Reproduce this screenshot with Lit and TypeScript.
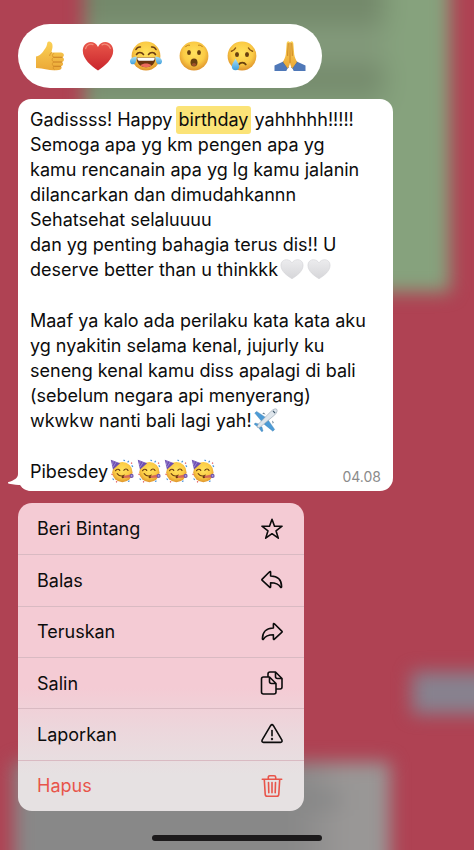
import { LitElement, html, css, svg, TemplateResult, SVGTemplateResult } from "lit";
import { customElement } from "lit/decorators.js";

const face = svg`<circle cx="16" cy="16" r="14.4" fill="url(#face)"/>`;

const emoji: Record<string, SVGTemplateResult> = {
  thumb: svg`
    <path d="M2 16.500c2.600-.8 5.200-2.200 6.800-4.600 1.800-2.600 3.700-4.600 4.200-7.400.3-1.900.6-3.200 2.300-3 2.600.3 3.600 3 3.200 5.800-.3 2-.9 3.400-1 5.200h9.400c3.300 0 4 4 1.400 4.800 2.400.9 2.200 4.200-.4 4.700 1.900 1 1.400 3.900-.9 4.300 1.300 1.300.5 3.500-2 3.700-3.600.3-8.600.6-12-.4C9 28.500 6 28.200 2 28z" fill="url(#hand)"/>
    <path d="M19.500 17.300h8.600M19.500 22h8.200M19.500 26.300h7" fill="none" stroke="#c97f22" stroke-width="1.100" stroke-linecap="round"/>
    <path d="M17.500 12.700c-1 .6-1.700 1.500-1.800 2.900" fill="none" stroke="#d8932c" stroke-width="1" stroke-linecap="round"/>
    <path d="M20.200 13.500c-2.300.3-2.400 3.300-.3 3.800-2.400.4-2.300 4.200 0 4.700-2.200.5-2 4 .2 4.300-1.400.8-1.100 2.800.5 3.400" fill="none" stroke="#d8932c" stroke-width=".9"/>`,
  heart: svg`<path d="M16 30.500C9.500 26 .8 19.500.8 10.800.8 5.500 4.300 2 8.600 2c3.300 0 5.900 1.900 7.400 4.900C17.500 3.900 20.100 2 23.400 2c4.300 0 7.800 3.500 7.800 8.800C31.200 19.500 22.500 26 16 30.500z" fill="url(#red)"/>
    <path d="M3.600 8.500C4.500 5 8 3.400 11 4.600M20 4.800c3.500-1.600 7.200.2 8.300 3.500" fill="none" stroke="#f59a86" stroke-width="1.300" stroke-linecap="round" opacity=".8"/>`,
  joy: svg`${face}
    <path d="M6 9.500c.8-1.700 2.600-2.700 4.400-2.500M26 9.500c-.8-1.700-2.600-2.700-4.400-2.500M6.500 14.500c1.400-2.600 5.200-2.600 7 0M18.500 14.500c1.800-2.600 5.600-2.600 7 0" fill="none" stroke="#6b3d12" stroke-width="1.600" stroke-linecap="round"/>
    <path d="M6.500 17.500h19c0 6-4 9.800-9.500 9.800s-9.500-3.800-9.500-9.800z" fill="#6a3410"/>
    <path d="M7.300 17.700h17.400c0 1.800-.6 3-1.800 3H9.200c-1.200 0-1.900-1.200-1.900-3z" fill="#fff"/>
    <path d="M10.500 25.200c3-2.300 8-2.300 11 0-3 2.700-8 2.700-11 0z" fill="#ec6a5c"/>
    <path d="M6.800 16.500C3 16.700-.3 18.500 0 21.800c.3 2.900 4 3.500 5.400.9.900-1.700 1-3.900 1.400-6.200zM25.200 16.500c3.800.2 7.100 2 6.800 5.300-.3 2.900-4 3.500-5.400.9-.9-1.700-1-3.900-1.400-6.200z" fill="url(#tear)"/>`,
  wow: svg`${face}
    <ellipse cx="11" cy="12.500" rx="1.900" ry="2.500" fill="#68400f"/><ellipse cx="21" cy="12.500" rx="1.900" ry="2.500" fill="#68400f"/>
    <path d="M7.500 6.800c1-1.300 2.500-1.800 4-1.600M24.500 6.800c-1-1.300-2.500-1.800-4-1.600" fill="none" stroke="#b8791b" stroke-width="1" stroke-linecap="round"/>
    <ellipse cx="16" cy="22.500" rx="3.500" ry="3.900" fill="#68400f"/><ellipse cx="16" cy="24.500" rx="2.200" ry="1.500" fill="#a0522c"/>`,
  cry: svg`${face}
    <path d="M5.500 11.300c1.500-.5 3.200-1.700 4-3.300M26.500 11.300c-1.500-.5-3.200-1.700-4-3.300" fill="none" stroke="#8a5614" stroke-width="1.500" stroke-linecap="round"/>
    <ellipse cx="11" cy="14.500" rx="2" ry="2.600" fill="#68400f"/><ellipse cx="21" cy="14.500" rx="2" ry="2.600" fill="#68400f"/>
    <path d="M12.800 24.500c1.500-2.600 5.500-2.600 7 0" fill="none" stroke="#68400f" stroke-width="1.700" stroke-linecap="round"/>
    <path d="M9.500 18.500c-1.200 3-3.700 5-3.700 8a3.700 3.700 0 0 0 7.400 0c0-3-2.600-5-3.700-8z" fill="url(#tear)"/>`,
  pray: svg`
    <path d="M.5 25.500l8.300-3.800 5 6.300-1.500 3H.5zM31.500 25.500l-8.300-3.800-5 6.300 1.500 3h11.800z" fill="#4f78b8"/>
    <path d="M9.200 21.500l5 6.600M22.800 21.500l-5 6.600" stroke="#2f5793" stroke-width="1.600" fill="none"/>
    <path d="M15.900 2.500c-1.300-2.200-3.300-1.200-3.300 1.300l-.8 10.500c-.4 3-1.900 5.700-2.800 7.800l4.700 6.400c1.200-1.700 2.300-4 2.300-6zM16.100 2.500c1.300-2.200 3.300-1.200 3.300 1.300l.8 10.500c.4 3 1.900 5.700 2.800 7.800l-4.700 6.400c-1.200-1.700-2.300-4-2.300-6z" fill="url(#hand)"/>
    <path d="M16 3v19.500M14.200 3.500l-.5 12M17.800 3.500l.5 12" fill="none" stroke="#c67d1f" stroke-width=".9" stroke-linecap="round"/>`,
  white: svg`<path d="M16 29C9.500 25 1.200 19 1.200 11 1.200 6.500 4.500 3.500 8.400 3.500c3.200 0 6 1.700 7.600 4.200 1.600-2.500 4.400-4.200 7.600-4.200 3.900 0 7.200 3 7.200 7.500 0 8-8.300 14-14.800 18z" fill="url(#pale)" stroke="#cfcfd2" stroke-width=".7"/>`,
  plane: svg`
    <path d="M17 13.500L3.500 4.500 1 6.800l9.700 11.500zM18.500 15.500l9 13-2.300 2.500-11.700-9.500zM7 21.500L1.500 20l-1.200 1.700L6 26zM10.500 25l1.500 5.500-1.700 1.200L6 26z" fill="#4c9bd6" stroke="#3579ad" stroke-width=".5"/>
    <path d="M30.300 1.700c-2-1.500-5.200.3-7.500 2.600L6 21.200c-1.300 1.500-2 3.500-1.500 4.800 1.300.6 3.300-.2 4.800-1.500L27.700 9.200c2.300-2.300 4.100-5.500 2.600-7.500z" fill="#dfe6ec" stroke="#93a3b0" stroke-width=".8"/>
    <path d="M25.300 3.800c.9 1 1.900 2 2.900 2.900" stroke="#3d5568" stroke-width="1.400" fill="none"/>
    <path d="M11 7.500l2-1.500 2.500 2.500zM25 21l1.500-2-2.500-2.500z" fill="#6c8496"/>`,
  party: svg`<circle cx="16.500" cy="17.500" r="13.500" fill="url(#face)"/>
    <path d="M1 1l12.500 4.800L4 14z" fill="#6d4fb0"/><path d="M4.500 2.400L3 8.500M8.500 3.900l-4.800 7.400" stroke="#a995df" stroke-width="1"/>
    <path d="M7.500 15.500c1.300-2.400 4.400-2.400 5.500-.3M18.500 15c1.300-2.300 4.400-2.200 5.500.2" fill="none" stroke="#6b3d12" stroke-width="1.600" stroke-linecap="round"/>
    <path d="M9.500 19.500c2.500 3 6.500 3.800 9.500 2" fill="none" stroke="#6b3d12" stroke-width="1.500" stroke-linecap="round"/>
    <path d="M16.500 23l10.500-2.500 2.500 4-12 .8z" fill="#d66a58"/><circle cx="28.800" cy="22.500" r="2.700" fill="#715aae"/><circle cx="28.800" cy="22.500" r="1.100" fill="#b9a8e3"/>
    <circle cx="17" cy="24.300" r="1.500" fill="#6a3410"/>
    <path d="M18 1.500l2 .8M25 2.500l-1.500 2M29 8.500l1.500 2M3.500 26l1.500 2M24 30l2-.8" stroke="#4a92d8" stroke-width="1.600"/>
    <path d="M28 5l1.500 1M2 20l1.500 1M8 30l1.500.8" stroke="#e0555a" stroke-width="1.600"/>`,
};

const glyph: Record<string, SVGTemplateResult> = {
  star: svg`<path d="M12 2.200l2.500 7h7.600L16 13.800l2.300 7.400-6.300-4.500-6.300 4.500L8 13.800 1.900 9.200h7.600z"/>`,
  reply: svg`<path d="M2 11.400l7.600-7.600c.5-.5 1-.3 1 .4V8c6.800 0 11 3.700 11 10.800 0 .9-.7 1-1.100.3-1.900-3.300-4.600-4.300-9.900-4.300v4c0 .7-.5.9-1 .4L2 12.200c-.3-.3-.3-.5 0-.8z"/>`,
  forward: svg`<path d="M22 11.400l-7.600-7.600c-.5-.5-1-.3-1 .4V8c-6.800 0-11 3.700-11 10.800 0 .9.700 1 1.100.3 1.900-3.300 4.600-4.300 9.900-4.300v4c0 .7.5.9 1 .4l7.600-7c.3-.3.300-.5 0-.8z"/>`,
  copy: svg`<path d="M8 5.500V3q0-2 2-2h5.500L22 7.500V16q0 2-2 2h-3.500M15.500 1.200v4.300q0 2 2 2h4.300M3.500 6h6L16 12.500V21q0 2-2 2H3.500q-2 0-2-2V8q0-2 2-2zM9.500 6.200v4.300q0 2 2 2h4.300"/>`,
  warn: svg`<path d="M10.600 3.700q1.400-2.200 2.800 0l8.400 14.200q1 2.300-1.400 2.500H3.600q-2.400-.2-1.400-2.500z"/><path d="M12 8.600v5.200"/><circle cx="12" cy="17" r=".4"/>`,
  trash: svg`<path d="M2.300 5.200h19.400M8.300 5V3.300q0-1.600 1.600-1.600h4.200q1.600 0 1.600 1.600V5M4.300 5.500l.9 14.700q.1 2.100 2.200 2.100h9.200q2.100 0 2.200-2.100l.9-14.700M8.500 8.500l.3 10.300M12 8.500v10.300M15.500 8.500l-.3 10.300"/>`,
};

const reactions = [
  ["thumb", "Suka"],
  ["heart", "Cinta"],
  ["joy", "Tertawa"],
  ["wow", "Kaget"],
  ["cry", "Sedih"],
  ["pray", "Terima kasih"],
];

const actions = [
  { label: "Beri Bintang", icon: "star" },
  { label: "Balas", icon: "reply" },
  { label: "Teruskan", icon: "forward" },
  { label: "Salin", icon: "copy" },
  { label: "Laporkan", icon: "warn" },
  { label: "Hapus", icon: "trash" },
];

const pic = (name: string, size: string): TemplateResult =>
  html`<svg class=${size} viewBox="0 0 32 32" aria-hidden="true">${emoji[name]}</svg>`;

@customElement("app-root")
export class AppRoot extends LitElement {
  static styles = css`
    :host {
      display: block;
      font-family: Inter, "Liberation Sans", sans-serif;
      color: #0c0c0c;
    }
    .screen {
      position: relative;
      box-sizing: border-box;
      min-height: 100vh;
      overflow: hidden;
      background: #af4253;
      padding: 24px 18px 9px;
      display: flex;
      flex-direction: column;
      align-items: flex-start;
      isolation: isolate;
    }
    .blur {
      position: absolute;
      z-index: -1;
      filter: blur(9px);
    }
    .chat {
      top: -30px;
      left: 84px;
      right: 24px;
      height: 322px;
      background:
        radial-gradient(closest-side, #748769, transparent) 185px 172px / 120px 40px no-repeat,
        linear-gradient(90deg, transparent 78%, #86a27d 86%),
        linear-gradient(#74896b 44px, #82997a 66px, #82997a 84px, #74896b 108px, #7b9373 124px, #86a27d 150px);
    }
    .sheet {
      top: 762px;
      left: 14px;
      right: 84px;
      height: 120px;
      background:
        linear-gradient(90deg, #888 82%, transparent 90%) 0 28px / 100% 20px no-repeat,
        linear-gradient(90deg, #888 74%, #999796 88%);
    }
    .chip {
      top: 672px;
      left: 412px;
      right: -20px;
      height: 42px;
      background: #87828f;
    }
    .defs {
      position: absolute;
      width: 0;
      height: 0;
    }
    button {
      font: inherit;
      color: inherit;
      border: 0;
      margin: 0;
      background: none;
      cursor: pointer;
    }
    .reactions {
      display: flex;
      padding: 0 8px;
      height: 64px;
      border-radius: 32px;
      background: #fff;
    }
    .reaction {
      width: 48px;
      padding: 0;
      display: grid;
      place-items: center;
    }
    .big {
      width: 32px;
      height: 32px;
    }
    .bubble {
      position: relative;
      box-sizing: border-box;
      align-self: stretch;
      margin: 11px 63px 12px 0;
      padding: 8px 12px 7px;
      border-radius: 13px;
      background: #fff;
      font-size: 18px;
      line-height: 25px;
      display: flex;
      flex-direction: column;
      gap: 26px;
    }
    .tail {
      position: absolute;
      left: -10px;
      bottom: 0;
      width: 26px;
      height: 26px;
      fill: #fff;
      z-index: -1;
    }
    p {
      margin: 0;
      white-space: nowrap;
    }
    mark {
      background: #fbe377;
      color: inherit;
      border-radius: 3px;
      padding: 3px 3px 4px;
      margin: 0 -2px;
    }
    .small {
      width: 24px;
      height: 24px;
      margin: 0 1px 0 2px;
      vertical-align: -5px;
    }
    .last {
      display: flex;
      justify-content: space-between;
      align-items: flex-end;
    }
    time {
      font-size: 14px;
      line-height: 14px;
      color: #8b8b8b;
    }
    .menu {
      list-style: none;
      margin: 0;
      padding: 0;
      box-sizing: border-box;
      width: 286px;
      max-width: 100%;
      min-height: 308px;
      display: grid;
      grid-auto-rows: 1fr;
      border-radius: 14px;
      overflow: hidden;
      background: linear-gradient(#f4cbd4 60%, #ecd7dc 74%, #e6e1e2 88%);
    }
    .item + .item {
      border-top: 1px solid #d9bac2;
    }
    .action {
      width: 100%;
      height: 100%;
      padding: 0 20px 0 19px;
      display: flex;
      align-items: center;
      justify-content: space-between;
      font-size: 18px;
      line-height: 25px;
    }
    .item:last-child {
      color: #e8544a;
    }
    .icon {
      width: 24px;
      height: 24px;
      fill: none;
      stroke: currentColor;
      stroke-width: 1.6;
      stroke-linejoin: round;
      stroke-linecap: round;
    }
    .home {
      align-self: center;
      width: 170px;
      height: 6px;
      margin-top: auto;
      border-radius: 3px;
      background: #1c1a1b;
    }
  `;

  render() {
    return html`
      <main class="screen">
        <div class="blur chat"></div>
        <div class="blur sheet"></div>
        <div class="blur chip"></div>
        <svg class="defs" aria-hidden="true">
          <defs>
            <radialGradient id="face" cx=".5" cy=".4" r=".62">
              <stop offset="0" stop-color="#ffe25e" /><stop offset=".6" stop-color="#fbcb45" /><stop offset="1" stop-color="#dc8f2a" />
            </radialGradient>
            <linearGradient id="hand" x2="0" y2="1">
              <stop offset="0" stop-color="#fbd155" /><stop offset="1" stop-color="#eba837" />
            </linearGradient>
            <linearGradient id="red" x2="0" y2="1">
              <stop offset="0" stop-color="#e9574a" /><stop offset="1" stop-color="#c9252c" />
            </linearGradient>
            <linearGradient id="tear" x2="0" y2="1">
              <stop offset="0" stop-color="#a9e0f8" /><stop offset="1" stop-color="#3f9fdc" />
            </linearGradient>
            <linearGradient id="pale" x2="0" y2="1">
              <stop offset="0" stop-color="#ececee" /><stop offset="1" stop-color="#d6d6d9" />
            </linearGradient>
          </defs>
        </svg>

        <div class="reactions">
          ${reactions.map(([name, label]) => html`<button class="reaction" aria-label=${label}>${pic(name, "big")}</button>`)}
        </div>

        <article class="bubble">
          <svg class="tail" viewBox="0 0 26 26" aria-hidden="true">
            <path d="M10 0v9c0 4-4 6.500-9.500 8-1 .4-.6 1.500.5 1.700 4.500.9 9 1.200 12.500 1.200 2 3.500 6 6.100 12.500 6.100V0z" />
          </svg>
          <p>
            Gadissss! Happy <mark>birthday</mark> yahhhhh!!!!!<br />
            Semoga apa yg km pengen apa yg<br />
            kamu rencanain apa yg lg kamu jalanin<br />
            dilancarkan dan dimudahkannn<br />
            Sehatsehat selaluuuu<br />
            dan yg penting bahagia terus dis!! U<br />
            deserve better than u thinkkk${pic("white", "small")}${pic("white", "small")}
          </p>
          <p>
            Maaf ya kalo ada perilaku kata kata aku<br />
            yg nyakitin selama kenal, jujurly ku<br />
            seneng kenal kamu diss apalagi di bali<br />
            (sebelum negara api menyerang)<br />
            wkwkw nanti bali lagi yah!${pic("plane", "small")}
          </p>
          <div class="last">
            <p>Pibesdey${[0, 1, 2, 3].map(() => pic("party", "small"))}</p>
            <time>04.08</time>
          </div>
        </article>

        <ul class="menu">
          ${actions.map(
            ({ label, icon }) => html`<li class="item">
              <button class="action">
                <span>${label}</span>
                <svg class="icon" viewBox="0 0 24 24" aria-hidden="true">${glyph[icon]}</svg>
              </button>
            </li>`
          )}
        </ul>

        <div class="home"></div>
      </main>
    `;
  }
}
